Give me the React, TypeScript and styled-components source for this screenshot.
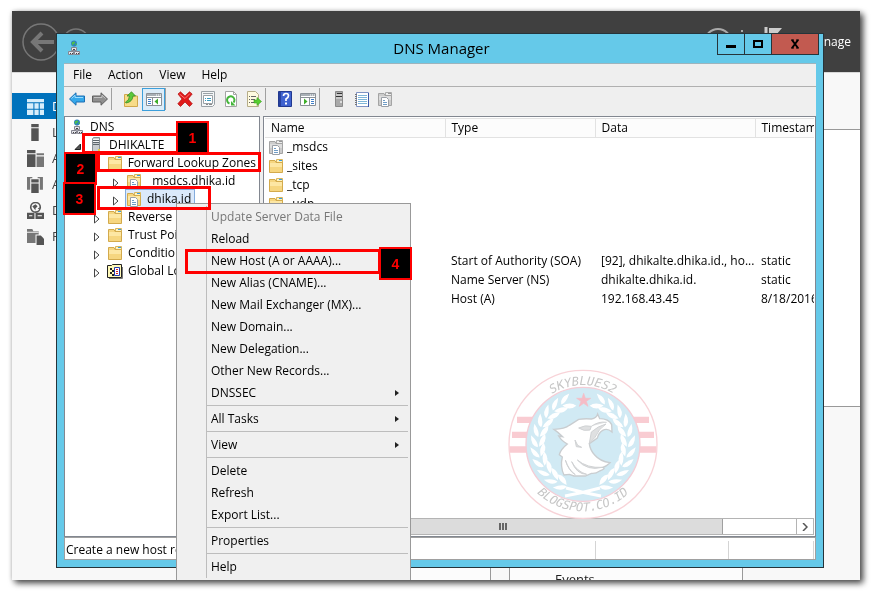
import React from "react";
import styled, { createGlobalStyle, css } from "styled-components";

const GlobalStyle = createGlobalStyle`
  *, *::before, *::after { box-sizing: border-box; }
  body { margin: 0; background: #fff; color: #000; font: 12px/18px "Open Sans", "Noto Sans", sans-serif; }
  button { font: inherit; color: inherit; padding: 0; margin: 0; border: 0; background: none; }
  ul { list-style: none; margin: 0; padding: 0; }
  svg { display: block; flex: none; }
`;

/* ---------- Server Manager behind the console ---------- */

const Screen = styled.div`
  position: relative;
  height: calc(100vh - 22px);
  margin: 11px 11px 11px 12px;
  overflow: hidden;
  background: #f8f8f8;
`;
const Shadow = styled.div`
  overflow: hidden;
  ${Screen} { overflow: visible; clip-path: inset(0); }
  filter: drop-shadow(3px 3px 3px rgba(0, 0, 0, 0.7)) drop-shadow(0 0 2px rgba(0, 0, 0, 0.15));
`;
const ManagerBar = styled.header`
  display: flex;
  align-items: center;
  height: 61px;
  padding: 0 9px;
  background: #404040;
  color: #fff;
`;
const BarSpacer = styled.div`
  flex: 1;
`;
const ManagerBody = styled.div`
  display: flex;
  border-top: 1px solid #d8d8d8;
`;
const Nav = styled.nav`
  width: 164px;
  padding-top: 20px;
`;
const NavLink = styled.a<{ $active?: boolean }>`
  display: flex;
  align-items: center;
  gap: 8px;
  height: 26px;
  padding-left: 15px;
  font-size: 13px;
  white-space: nowrap;
  text-decoration: none;
  color: ${(p) => (p.$active ? "#fff" : "#444")};
  background: ${(p) => (p.$active ? "#0072bc" : "transparent")};
`;
const Dashboard = styled.main`
  flex: 1;
  padding-top: 56px;
`;
const Welcome = styled.section`
  height: 278px;
  border: solid #999;
  border-width: 1px 0;
  background: #fff;
`;
const Cards = styled.div`
  display: flex;
  gap: 18px;
  padding: 60px 117px 0 81px;
`;
const Card = styled.section`
  flex: 1;
  height: 200px;
  padding: 102px 0 0 45px;
  border: 1px solid #999;
  background: #fcfcfc;
  font-size: 13px;
  color: #222;
`;

/* ---------- DNS Manager window ---------- */

const Window = styled.section`
  position: absolute;
  inset: 22px 36px 12px 44px;
  display: flex;
  flex-direction: column;
  padding: 0 7px 7px;
  border: 1px solid #26343a;
  background: #65c9e9;
`;
const TitleBar = styled.header`
  display: grid;
  grid-template-columns: 1fr auto 1fr;
  height: 29px;
  margin-right: -3px;
`;
const AppIcon = styled.div`
  padding: 6px 0 0 2px;
`;
const Title = styled.h1`
  margin: 0;
  font-size: 15px;
  font-weight: 400;
  line-height: 29px;
`;
const Caption = styled.div`
  display: flex;
  justify-content: flex-end;
  height: 21px;
`;
const CaptionButton = styled.button<{ $close?: boolean }>`
  display: grid;
  place-items: center;
  width: ${(p) => (p.$close ? 48 : 28)}px;
  margin-left: -1px;
  border: 1px solid #26343a;
  border-top: 0;
  background: ${(p) => (p.$close ? "#c25a50" : "transparent")};
`;
const MenuBar = styled.div`
  display: flex;
  gap: 16px;
  height: 24px;
  padding: 0 0 1px 9px;
  border-top: 1px solid #9db4bd;
  border-bottom: 1px solid #b0b0b0;
  background: #efefef;
`;
const ToolBar = styled.div`
  display: flex;
  align-items: center;
  height: 29px;
  padding: 0 0 5px 1px;
  background: #efefef;
`;
const Tool = styled.button<{ $on?: boolean }>`
  display: grid;
  place-items: center;
  width: 23px;
  height: 23px;
  ${(p) => p.$on && css`
    border: 1px solid #3c9fdb;
    background: #dcecf8;
  `}
`;
const ToolRule = styled.span`
  width: 1px;
  height: 22px;
  margin-right: 7px;
  background: #a0a0a0;
`;
const Panes = styled.div`
  display: flex;
  flex: 1;
  gap: 3px;
  min-height: 0;
  background: #efefef;
`;
const TreePane = styled.div`
  width: 196px;
  padding-top: 1px;
  border: 1px solid #828790;
  background: #fff;
  overflow: hidden;
`;
const TreeRow = styled.li<{ $level: number }>`
  display: flex;
  align-items: center;
  height: 18px;
  padding-left: ${(p) => p.$level * 19 - 12}px;
  white-space: nowrap;
  ${(p) => p.$level === 0 && css`padding-left: 4px;`}
`;
const Expander = styled.span`
  width: 16px;
  padding: 3px 0 0 2px;
`;
const TreeLabel = styled.span<{ $selected?: boolean }>`
  display: flex;
  align-items: center;
  gap: 5px;
  height: 18px;
  padding-right: 3px;
  box-shadow: ${(p) => (p.$selected ? "0 0 0 1px #84acdd" : "none")};
  background: ${(p) => (p.$selected ? "#dbe9fb" : "transparent")};
`;
const ListPane = styled.div`
  display: flex;
  flex: 1;
  flex-direction: column;
  justify-content: space-between;
  min-width: 0;
  padding: 1px;
  border: 1px solid #828790;
  background: #fff;
`;
const Records = styled.table`
  width: 100%;
  table-layout: fixed;
  border-collapse: collapse;
  th, td {
    height: 19px;
    padding: 0 0 0 6px;
    overflow: hidden;
    text-align: left;
    font-weight: 400;
    white-space: nowrap;
  }
  th {
    border: solid #e2e2e2;
    border-width: 1px 1px 1px 0;
    background: #fcfcfc;
  }
  td:first-child { padding-left: 3px; }
  th:last-child { border-right: 0; }
`;
const NameCell = styled.span`
  display: flex;
  align-items: center;
  gap: 3px;
`;
const ScrollBar = styled.div`
  display: flex;
  height: 17px;
  border: 1px solid #b4b4b4;
  background: #fff;
`;
const ScrollArrow = styled.button`
  display: grid;
  place-items: center;
  width: 17px;
  border: solid #b4b4b4;
  border-width: 0 0 0 1px;
`;
const Thumb = styled.div`
  display: grid;
  flex: 1;
  place-items: center;
  margin-right: 73px;
  border-right: 1px solid #a0a0a0;
  background: #dcdcdc;
`;
const StatusBar = styled.footer`
  display: flex;
  height: 23px;
  padding: 3px 1px 0 0;
  border: 1px solid #a0a0a0;
  background: #fff;
`;
const StatusCell = styled.div<{ $width?: number }>`
  flex: ${(p) => (p.$width ? `0 0 ${p.$width}px` : "1")};
  padding-left: 1px;
  overflow: hidden;
  white-space: nowrap;
  border-right: 1px solid #d4d4d4;
`;

/* ---------- Context menu ---------- */

const ContextMenu = styled.div`
  position: absolute;
  left: 164px;
  top: 192px;
  width: 235px;
  padding: 2px;
  border: 1px solid #999;
  background: #f0f0f0;
`;
const MenuList = styled.div`
  margin-left: 27px;
  border-left: 1px solid #bdbdbd;
`;
const MenuItem = styled.button`
  display: flex;
  align-items: center;
  justify-content: space-between;
  width: 100%;
  height: 22px;
  padding: 0 8px 0 4px;
  text-align: left;
  white-space: nowrap;
  &:disabled { color: #777; }
`;
const MenuRule = styled.hr`
  height: 1px;
  margin: 1px 0 2px;
  border: 0;
  background: #bdbdbd;
`;

/* ---------- Step markers ---------- */

const Outline = styled.div<{ $x: number; $y: number; $w: number; $h: number }>`
  position: absolute;
  left: ${(p) => p.$x}px;
  top: ${(p) => p.$y}px;
  width: ${(p) => p.$w}px;
  height: ${(p) => p.$h}px;
  border: 3px solid #f00;
  pointer-events: none;
`;
const Step = styled.div<{ $x: number; $y: number }>`
  position: absolute;
  left: ${(p) => p.$x}px;
  top: ${(p) => p.$y}px;
  display: grid;
  place-items: center;
  width: 33px;
  height: 33px;
  border: 2px solid #f00;
  background: #000;
  color: #f00;
  font: bold 14px/16px "Liberation Sans", sans-serif;
`;
const Watermark = styled.svg`
  position: absolute;
  left: 488px;
  top: 349px;
  pointer-events: none;
`;

/* ---------- Icons ---------- */

const Svg = ({ children, size = 16 }: { children: React.ReactNode; size?: number }) => (
  <svg width={size} height={size} viewBox="0 0 16 16" aria-hidden="true">{children}</svg>
);

const FolderShape = ({ grey }: { grey?: boolean }) => (
  <>
    <path d="M8.500 4.500V1.500H14.500V5" fill={grey ? "#eee" : "#fff3c0"} stroke={grey ? "#aaa" : "#d9b65c"} />
    <path d="M11 2h3v1h-3z" fill={grey ? "#999" : "#3a9be0"} />
    <path d="M1.500 14.500V2.500H7L8 4.500H14.500V14.500Z" fill={grey ? "#ccc" : "#f6d680"} stroke={grey ? "#a4a4a4" : "#d3aa4c"} />
    <path d="M2 5h12v4H2z" fill={grey ? "#ddd" : "#fde7a4"} />
  </>
);
const PageShape = () => (
  <>
    <path d="M4.500 6.500h5l2 2v7h-7z" fill="#fff" stroke="#9a9fa6" />
    <path d="M6 9.500h2M6 11.500h4M6 13.500h4" stroke="#6f9cc6" />
  </>
);
const FolderIcon = () => <Svg><FolderShape /></Svg>;
const ZoneIcon = ({ grey }: { grey?: boolean }) => <Svg><FolderShape grey={grey} /><PageShape /></Svg>;
const DnsIcon = () => (
  <Svg>
    <circle cx="8" cy="3.500" r="3" fill="#2c7fc4" />
    <path d="M5.500 3q1-2 3-1.500l1 1.500-2 1-.5 2zM9 5l2-2v2z" fill="#4fc04a" />
    <path d="M8 6.500v2" stroke="#777" />
    <path d="M5.500 7.500h5v3h-5zM2.500 11.500h5v3h-5zM8.500 11.500h5v3h-5z" fill="#e4e4ea" stroke="#858590" />
    <path d="M7 9.500h2M4 13.500h1M6 13.500h1M10 13.500h1M12 13.500h1" stroke="#444" />
  </Svg>
);
const ServerIcon = () => (
  <Svg>
    <path d="M4.500 2l1-1.500h6V14l-1 1.500h-6z" fill="#c8cdd0" stroke="#879095" />
    <path d="M5 3.500h6M5 5.500h6M5 7.500h6" stroke="#5c666c" />
    <path d="M5 2.500h6M5 4.500h6" stroke="#f4f7f8" />
    <path d="M10 12h2v3h-2z" fill="#e2cb45" />
  </Svg>
);
const LogsIcon = () => (
  <Svg>
    <path d="M.5 14.500v-12h4l1-1h9v13z" fill="#fff9b8" stroke="#222" />
    <path d="M15.500 4v11.500H2" fill="none" stroke="#777" />
    <path d="M3 5h2v2H3zM5 7h2v2H5zM3 9h2v2H3zM5 11h2v2H5z" fill="#222" />
    <path d="M7.500 4.500h5v8h-5z" fill="#fff" stroke="#2438b0" />
    <path d="M9 6.500h2M9 8.500h2M9 10.500h2" stroke="#d22" />
  </Svg>
);
const ArrowIcon = ({ right }: { right?: boolean }) => (
  <Svg>
    <g transform={right ? "matrix(-1 0 0 1 16 0)" : undefined}>
      <path d="M.5 8 7 1.800V5h8.500v6H7v3.200z" fill={right ? "#8f8f8f" : "#35a8ea"} stroke={right ? "#5f5f5f" : "#1c6fb4"} />
      <path d="M2.500 7.500 6 4.200V6.500h8" fill="none" stroke={right ? "#c4c4c4" : "#9adcff"} />
    </g>
  </Svg>
);
const UpFolderIcon = () => (
  <Svg>
    <path d="M1.500 15.500v-12h5l1 1.500h7v10.500z" fill="#f8dc88" stroke="#d0a84c" />
    <path d="M2.500 11q3.500-1 4-6H4L8.500 .8l4 4.200H10q-.5 6-7 7z" fill="#5cc83a" stroke="#3a8e26" strokeWidth=".8" />
  </Svg>
);
const PaneIcon = ({ flip }: { flip?: boolean }) => (
  <Svg>
    <path d="M.5 2.500h15v12H.5z" fill="#fff" stroke="#8a9096" />
    <path d="M1 3h14v2H1z" fill="#a9b0b6" />
    <path d="M10 4h1M12 4h1M14 4h1" stroke="#fff" />
    <path d="M1 6.500h14" stroke="#8a9096" />
    <g transform={flip ? "matrix(-1 0 0 1 16 0)" : undefined}>
      <path d="M6.500 7v7" stroke="#8a9096" />
      <path d="M2 8.500h3M2 10.500h3M2 12.500h3" stroke="#3f7fc8" />
      <path d="M12 7.500v6L8.500 10.500z" fill="#3cae28" />
    </g>
  </Svg>
);
const DeleteIcon = () => (
  <Svg>
    <path d="M1 3 3.500.8 8 5l4.500-4.200L15.200 3 11 8l4.300 4.800L12.500 15.500 8 11l-4.500 4.500L.8 12.800 5 8z" fill="#e01a1a" stroke="#b01010" strokeWidth=".7" />
    <path d="M2.500 3 8 7.500 13 2.500" fill="none" stroke="#f77" />
  </Svg>
);
const PropertiesIcon = () => (
  <Svg>
    <path d="M1.500 .5h13v13l-2 2h-11z" fill="#f4f6f7" stroke="#9aa1a6" />
    <path d="M3.500 4.500h9v8h-9z" fill="#fff" stroke="#9aa1a6" />
    <path d="M3 2.500h10" stroke="#9aa1a6" />
    <path d="M5 7.500h1M7 7.500h4M5 9.500h1M7 9.500h4" stroke="#3b9cc0" />
    <path d="M6 13.500h2M9 13.500h3" stroke="#888" />
  </Svg>
);
const RefreshIcon = () => (
  <Svg>
    <path d="M2.500 .5h8l3 3v12h-11z" fill="#fff" stroke="#a4a4a4" />
    <path d="M10.500 .5v3h3" fill="none" stroke="#a4a4a4" />
    <path d="M6.500 12.500A3.700 3.700 0 1 1 10.500 11.500" fill="none" stroke="#44b53a" strokeWidth="2" />
    <path d="M8 10v4.500h4.500z" fill="#44b53a" />
  </Svg>
);
const ExportIcon = () => (
  <Svg>
    <path d="M1.500 .5h8l3 3v12h-11z" fill="#fffbe0" stroke="#b6ad88" />
    <path d="M3 5.500h1M5 5.500h5M3 8.500h1M5 8.500h4M3 11.500h1M5 11.500h4" stroke="#666" />
    <path d="M8 9h3V6.500L15.500 10.500 11 14.500V12H8z" fill="#58cf30" stroke="#3a9e20" strokeWidth=".6" />
  </Svg>
);
const HelpIcon = () => (
  <Svg>
    <path d="M1.500 .5h13v15h-13z" fill="#3f62cf" stroke="#22398f" />
    <path d="M2 1h2v14H2z" fill="#26409e" />
    <path d="M6.500 5q0-2.500 2.500-2.500t2.500 2.300Q11.500 6.500 9 8v2" fill="none" stroke="#fff" strokeWidth="1.700" />
    <path d="M8 11.500h2v2H8z" fill="#fff" />
  </Svg>
);
const TowerIcon = () => (
  <Svg>
    <path d="M4.500 .5h7v15h-7z" fill="#a9a9a9" stroke="#8a8a8a" />
    <path d="M6 2.500h5M5 5.500h6" stroke="#333" />
    <path d="M5 4h6M5 7h6" stroke="#e8e8e8" />
    <path d="M9 10h2v2H9z" fill="#ddd" />
  </Svg>
);
const NotebookIcon = () => (
  <Svg>
    <path d="M2.500 1.500h12v14h-12z" fill="#fff" stroke="#7f93c4" />
    <path d="M14.500 2v14" stroke="#3a58a6" />
    <path d="M4 4.500h9M4 6.500h9M4 8.500h9M4 10.500h9M4 12.500h9" stroke="#7fb6d8" />
    <path d="M1 3.500h3M1 5.500h3M1 7.500h3M1 9.500h3M1 11.500h3M1 13.500h3" stroke="#777" strokeDasharray="2 1" />
  </Svg>
);

const navIcons = {
  dashboard: <path d="M0 1h16v3H0zM0 5h6v5H0zM7 5h4v5H7zM12 5h4v5h-4zM0 11h6v5H0zM7 11h4v5H7zM12 11h4v5h-4z" fill="#d8eefb" />,
  local: <path d="M4 0h7v3H4zM4 4h7v12H4z" fill="#555" />,
  all: <><path d="M0 0h8v3H0zM0 4h8v12H0z" fill="#555" /><path d="M9 3h7v2H9zM9 6h7v10H9z" fill="#777" /></>,
  adds: <><path d="M4 3h7v3H4zM4 7h7v9H4z" fill="#555" /><path d="M0 1h5v1H3v11H0zM15 1h-5v1h2v11h3z" fill="#777" /></>,
  dns: <><circle cx="8" cy="5" r="4.500" fill="none" stroke="#555" strokeWidth="1.500" /><path d="M5 4l3-2 2 2-2 2v2zM10 6l2-1v2z" fill="#555" /><path d="M0 10h7v6H0zM8 10h8v6H8z" fill="#555" /><path d="M2 13h3M10 13h4" stroke="#fff" /></>,
  files: <><path d="M0 1h5l1 2h5v3H8v8H0z" fill="#777" /><path d="M9 7h4l3 3v6H9z" fill="#555" /><path d="M0 4h11" stroke="#eee" /></>,
};

const Leaves = () => {
  const leaves = Array.from({ length: 11 }, (_, i) => 22 + i * 13);
  return (
    <g fill="#fff">
      {leaves.map((a) => (
        <g key={a} transform={`rotate(${a} 249 253)`}>
          <path d="M265 118Q250 120 230 96Q262 96 265 118Z" />
          <path d="M263 122Q250 146 224 138Q236 120 263 122Z" />
        </g>
      ))}
    </g>
  );
};

const Badge = () => (
  <Watermark width="170" height="170" viewBox="0 0 510 510">
    <defs>
      <path id="arcTop" d="M73 254a176 179 0 0 1 352 0" />
      <path id="arcBottom" d="M47 252a202 202 0 0 0 404 0" />
    </defs>
    <circle cx="249" cy="253" r="221" fill="#fff" />
    <path d="M51 170h396v19H51zM36 215h426v19H36zM28 259h442v19H28z" fill="#f9ccd2" />
    <circle cx="249" cy="253" r="222" fill="none" stroke="#f8d3d8" strokeWidth="4" />
    <circle cx="249" cy="253" r="171" fill="#d1eaf4" stroke="#f5ccd5" strokeWidth="4" />
    <Leaves />
    <g transform="matrix(-1 0 0 1 498 0)"><Leaves /></g>
    <path d="M195 408q55-10 105-24M303 408q-55-10-105-24" stroke="#fff" strokeWidth="9" fill="none" />
    <path d="M251 100l5 15h16l-13 9 5 15-13-9-13 9 5-15-13-9h16z" fill="#f5bcc6" stroke="#f5bcc6" strokeWidth="2" />
    <path d="M162 208Q195 207 208 196L236 178Q256 175 274 177Q290 174 293 162L299 176Q326 176 335 194L336 216Q322 203 308 211Q296 218 292 234L268 251Q270 270 284 285Q300 304 330 308Q318 320 308 322Q320 326 299 333Q286 342 274 340L256 348H222L208 343L192 345Q180 320 187 291L178 284Q182 268 202 252Q184 242 176 228L188 230Q176 218 162 208Z" fill="#fff" stroke="#c9cdd0" strokeWidth="4" />
    <path d="M236 204q20-10 38-5l-4 11q-18 5-34-6zM274 199q22-16 46-12M268 250l6-34q20-18 44-24-22 14-33 40zM225 240l8 16 12 6-16-2zM196 300q10 30 30 44-20-10-30-44zM215 305q16 30 45 38-30 0-45-38zM232 300q30 25 75 22-45 12-75-22z" fill="#dfe0e1" stroke="#d0d2d4" strokeWidth="3" />
    <g fill="#c6c6c6" fontFamily="DejaVu Sans Mono" fontStyle="italic" textAnchor="middle">
      <text fontSize="36"><textPath href="#arcTop" startOffset="50%">SKYBLUES2</textPath></text>
      <text fontSize="36"><textPath href="#arcBottom" startOffset="50%">BLOGSPOT.CO.ID</textPath></text>
    </g>
  </Watermark>
);

/* ---------- Data ---------- */

const nav: [keyof typeof navIcons, string][] = [
  ["dashboard", "Dashboard"],
  ["local", "Local Server"],
  ["all", "All Servers"],
  ["adds", "AD DS"],
  ["dns", "DNS"],
  ["files", "File and Storage"],
];

type Node = { label: string; level: number; icon: React.ReactNode; open?: boolean; selected?: boolean };
const tree: Node[] = [
  { label: "DNS", level: 0, icon: <DnsIcon /> },
  { label: "DHIKALTE", level: 1, icon: <ServerIcon />, open: true },
  { label: "Forward Lookup Zones", level: 2, icon: <FolderIcon />, open: true },
  { label: "_msdcs.dhika.id", level: 3, icon: <ZoneIcon /> },
  { label: "dhika.id", level: 3, icon: <ZoneIcon />, selected: true },
  { label: "Reverse Lookup", level: 2, icon: <FolderIcon /> },
  { label: "Trust Points", level: 2, icon: <FolderIcon /> },
  { label: "Conditional", level: 2, icon: <FolderIcon /> },
  { label: "Global Logs", level: 2, icon: <LogsIcon /> },
];

type Row = { name?: string; icon?: React.ReactNode; type?: string; data?: string; stamp?: string };
const records: Row[] = [
  { name: "_msdcs", icon: <ZoneIcon grey /> },
  { name: "_sites", icon: <FolderIcon /> },
  { name: "_tcp", icon: <FolderIcon /> },
  { name: "_udp", icon: <FolderIcon /> },
  {},
  {},
  { type: "Start of Authority (SOA)", data: "[92], dhikalte.dhika.id., ho...", stamp: "static" },
  { type: "Name Server (NS)", data: "dhikalte.dhika.id.", stamp: "static" },
  { type: "Host (A)", data: "192.168.43.45", stamp: "8/18/2016" },
];

const tools: ([string, React.ReactNode, boolean?] | null)[] = [
  ["Back", <ArrowIcon />],
  ["Forward", <ArrowIcon right />],
  null,
  ["Up one level", <UpFolderIcon />],
  ["Show or hide console tree", <PaneIcon />, true],
  null,
  ["Delete", <DeleteIcon />],
  ["Properties", <PropertiesIcon />],
  ["Refresh", <RefreshIcon />],
  ["Export list", <ExportIcon />],
  null,
  ["Help", <HelpIcon />],
  ["Show or hide action pane", <PaneIcon flip />],
  null,
  ["New server", <TowerIcon />],
  ["Filter", <NotebookIcon />],
  ["New record", <ZoneIcon grey />],
];

const SUBMENUS = ["DNSSEC", "All Tasks", "View"];
const menuGroups = [
  ["Update Server Data File", "Reload", "New Host (A or AAAA)...", "New Alias (CNAME)...", "New Mail Exchanger (MX)...", "New Domain...", "New Delegation...", "Other New Records...", "DNSSEC"],
  ["All Tasks"],
  ["View"],
  ["Delete", "Refresh", "Export List..."],
  ["Properties"],
  ["Help"],
];

export default function App() {
  return (
    <>
      <GlobalStyle />
      <Shadow>
        <Screen>
          <ManagerBar>
            <svg width="86" height="40" viewBox="0 0 86 40" fill="none" stroke="#777" strokeWidth="1.500" aria-hidden="true">
              <circle cx="20" cy="20" r="18" />
              <path d="M33 20H13M21 11l-9 9 9 9" strokeWidth="4" />
              <circle cx="55" cy="20" r="13" />
            </svg>
            <BarSpacer />
            <svg width="102" height="32" viewBox="0 0 102 32" fill="none" stroke="#aaa" strokeWidth="2" aria-hidden="true">
              <circle cx="14" cy="16" r="13" />
              <path d="M38 4v24" strokeDasharray="2 2" />
              <path d="M62 1v28" stroke="#ccc" strokeWidth="3" />
              <path d="M65 2h13l-6 7 6 7H65z" fill="#ccc" stroke="none" />
            </svg>
            <span>Manage</span>
          </ManagerBar>
          <ManagerBody>
            <Nav aria-label="Server Manager">
              {nav.map(([icon, label], i) => (
                <NavLink key={label} href="#" $active={i === 0}>
                  <Svg size={17}>{navIcons[icon]}</Svg>
                  {label}
                </NavLink>
              ))}
            </Nav>
            <Dashboard>
              <Welcome />
              <Cards>
                <Card />
                <Card>Events</Card>
              </Cards>
            </Dashboard>
          </ManagerBody>

          <Window>
            <TitleBar>
              <AppIcon><DnsIcon /></AppIcon>
              <Title>DNS Manager</Title>
              <Caption>
                <CaptionButton aria-label="Minimize">
                  <svg width="10" height="10"><path d="M0 6h10v3H0z" /></svg>
                </CaptionButton>
                <CaptionButton aria-label="Maximize">
                  <svg width="10" height="10"><path d="M1 2h8v6H1z" fill="none" stroke="#000" strokeWidth="2" /></svg>
                </CaptionButton>
                <CaptionButton $close aria-label="Close">
                  <svg width="10" height="10"><path d="M1 1h3M6 1h3M1 9h3M6 9h3" stroke="#000" /><path d="M2 1l6 8M8 1L2 9" stroke="#000" strokeWidth="2" /></svg>
                </CaptionButton>
              </Caption>
            </TitleBar>
            <MenuBar>
              {["File", "Action", "View", "Help"].map((m) => <button key={m}>{m}</button>)}
            </MenuBar>
            <ToolBar>
              {tools.map((t, i) => t
                ? <Tool key={i} aria-label={t[0]} $on={t[2]}>{t[1]}</Tool>
                : <ToolRule key={i} />)}
            </ToolBar>
            <Panes>
              <TreePane>
                <ul role="tree">
                  {tree.map((n) => (
                    <TreeRow key={n.label} $level={n.level} role="treeitem" aria-selected={!!n.selected}>
                      {n.level > 0 && (
                        <Expander>
                          <svg width="9" height="10" aria-hidden="true">
                            {n.open
                              ? <path d="M6.500 2v5.500H1z" fill="#555" stroke="#222" />
                              : <path d="M1.500 1v8L6 5z" fill="#fff" stroke="#444" />}
                          </svg>
                        </Expander>
                      )}
                      <TreeLabel $selected={n.selected}>{n.icon}{n.label}</TreeLabel>
                    </TreeRow>
                  ))}
                </ul>
              </TreePane>
              <ListPane>
                <Records>
                  <colgroup>
                    <col width="180" />
                    <col width="150" />
                    <col width="160" />
                    <col />
                  </colgroup>
                  <thead>
                    <tr><th>Name</th><th>Type</th><th>Data</th><th>Timestam</th></tr>
                  </thead>
                  <tbody>
                    {records.map((r, i) => (
                      <tr key={i}>
                        <td><NameCell>{r.icon}{r.name}</NameCell></td>
                        <td>{r.type}</td>
                        <td>{r.data}</td>
                        <td>{r.stamp}</td>
                      </tr>
                    ))}
                  </tbody>
                </Records>
                <ScrollBar>
                  <ScrollArrow aria-label="Scroll left" />
                  <Thumb>
                    <svg width="8" height="7"><path d="M1 0v7M4 0v7M7 0v7" stroke="#666" strokeWidth="2" /></svg>
                  </Thumb>
                  <ScrollArrow aria-label="Scroll right">
                    <svg width="6" height="8"><path d="M1 0l4 4-4 4" fill="none" stroke="#555" strokeWidth="1.500" /></svg>
                  </ScrollArrow>
                </ScrollBar>
              </ListPane>
            </Panes>
            <StatusBar>
              <StatusCell>Create a new host resource</StatusCell>
              <StatusCell $width={133} />
              <StatusCell $width={85} />
            </StatusBar>
          </Window>

          <Badge />

          <ContextMenu role="menu">
            <MenuList>
              {menuGroups.map((group, g) => (
                <React.Fragment key={g}>
                  {g > 0 && <MenuRule />}
                  {group.map((item) => (
                    <MenuItem key={item} role="menuitem" disabled={item === "Update Server Data File"}>
                      {item}
                      {SUBMENUS.includes(item) && <svg width="5" height="8"><path d="M0 1l4 3-4 3z" fill="#222" /></svg>}
                    </MenuItem>
                  ))}
                </React.Fragment>
              ))}
            </MenuList>
          </ContextMenu>

          <Outline $x={70} $y={122} $w={110} $h={21} />
          <Outline $x={85} $y={141} $w={164} $h={20} />
          <Outline $x={85} $y={175} $w={114} $h={24} />
          <Outline $x={173} $y={238} $w={196} $h={25} />
          <Step $x={164} $y={110}>1</Step>
          <Step $x={52} $y={141}>2</Step>
          <Step $x={51} $y={171}>3</Step>
          <Step $x={367} $y={236}>4</Step>
        </Screen>
      </Shadow>
    </>
  );
}
